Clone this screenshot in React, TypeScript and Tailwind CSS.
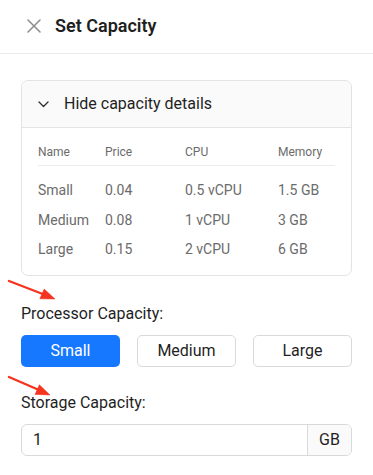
const rows = [
  { name: "Small", price: "0.04", cpu: "0.5 vCPU", mem: "1.5 GB" },
  { name: "Medium", price: "0.08", cpu: "1 vCPU", mem: "3 GB" },
  { name: "Large", price: "0.15", cpu: "2 vCPU", mem: "6 GB" },
];

const sizes = ["Small", "Medium", "Large"];

export default function App() {
  return (
    <div
      className="relative h-[475px] w-[373px] overflow-hidden bg-white text-[#1f1f1f]"
      style={{ fontFamily: "Roboto, 'Liberation Sans', Arial, sans-serif" }}
    >
      {/* header */}
      <div className="flex h-[54px] items-center gap-[14px] border-b border-[#ebebeb] pl-[27px] pb-[2px]">
        <svg width="14" height="14" viewBox="0 0 14 14" className="text-[#8c8c8c]">
          <path d="M1 1L13 13M13 1L1 13" stroke="currentColor" strokeWidth="1.5" strokeLinecap="round" />
        </svg>
        <span className="text-[18px] font-semibold leading-none">Set Capacity</span>
      </div>

      <div className="px-[21px] pt-[26px]">
        {/* details card */}
        <div className="overflow-hidden rounded-[7px] border border-[#e3e3e3]">
          <div className="flex h-[47px] items-center gap-[15px] border-b border-[#e3e3e3] bg-[#fafafa] pl-[16px]">
            <svg width="11" height="7" viewBox="0 0 11 7" className="text-[#333]">
              <path d="M1 1L5.5 5.5L10 1" fill="none" stroke="currentColor" strokeWidth="1.4" strokeLinecap="round" strokeLinejoin="round" />
            </svg>
            <span className="text-[16px] leading-none">Hide capacity details</span>
          </div>
          <div className="px-[16px] pt-[10px] pb-[10px]">
            <div className="grid h-[28px] grid-cols-[67px_80px_93px_1fr] items-center border-b border-[#ececec] text-[12px] text-[#6b6b6b]">
              <span>Name</span>
              <span>Price</span>
              <span>CPU</span>
              <span>Memory</span>
            </div>
            <div className="pt-[10px]">
              {rows.map((r) => (
                <div
                  key={r.name}
                  className="grid h-[29.5px] grid-cols-[67px_80px_93px_1fr] items-center text-[14px] text-[#6b6b6b]"
                >
                  <span>{r.name}</span>
                  <span>{r.price}</span>
                  <span>{r.cpu}</span>
                  <span>{r.mem}</span>
                </div>
              ))}
            </div>
          </div>
        </div>

        {/* processor */}
        <div className="pt-[29px] text-[16px] leading-[18px]">Processor Capacity:</div>
        <div className="mt-[12px] grid grid-cols-3 gap-[17px]">
          {sizes.map((s, i) => (
            <button
              key={s}
              className={
                i === 0
                  ? "h-[32px] rounded-[5px] bg-[#1677ff] text-[16px] text-white"
                  : "h-[32px] rounded-[5px] border border-[#d9d9d9] bg-white text-[16px] text-[#1f1f1f]"
              }
            >
              {s}
            </button>
          ))}
        </div>

        {/* storage */}
        <div className="pt-[27px] text-[16px] leading-[18px]">Storage Capacity:</div>
        <div className="mt-[12px] flex h-[32px] overflow-hidden rounded-[6px] border border-[#d9d9d9]">
          <div className="flex flex-1 items-center pl-[11px] text-[16px]">1</div>
          <div className="flex w-[44px] items-center justify-center border-l border-[#d9d9d9] bg-[#fafafa] text-[16px]">
            GB
          </div>
        </div>
      </div>

      {/* annotation arrows */}
      <svg className="pointer-events-none absolute left-0 top-0" width="373" height="475">
        <g fill="#f5341f" stroke="#f5341f">
          <line x1="9" y1="281" x2="44" y2="294.5" strokeWidth="2.4" strokeLinecap="round" />
          <polygon points="55,299 39.8,298.8 44.2,289" strokeWidth="0.5" />
          <line x1="9" y1="377" x2="39" y2="390" strokeWidth="2.4" strokeLinecap="round" />
          <polygon points="50,395 35,394.4 39.4,384.8" strokeWidth="0.5" />
        </g>
      </svg>
    </div>
  );
}
